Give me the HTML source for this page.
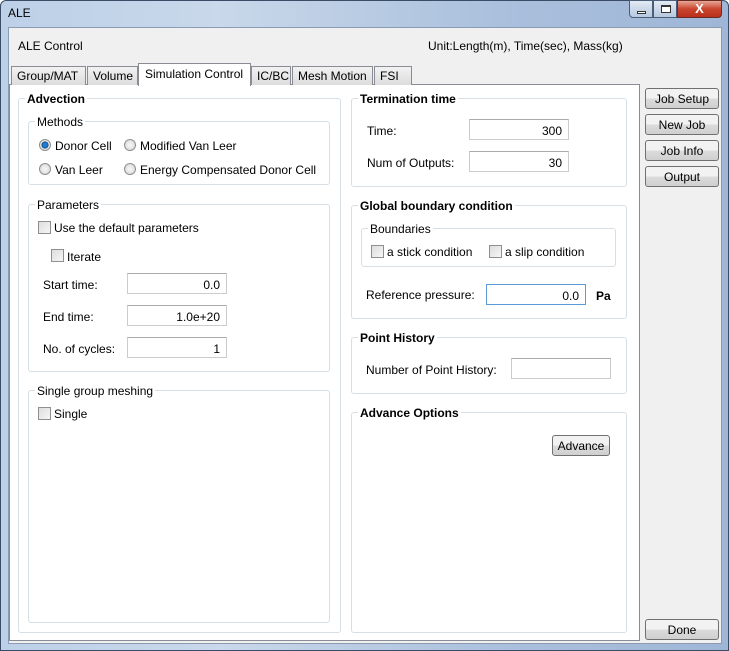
<!DOCTYPE html>
<html><head><style>
*{box-sizing:border-box;margin:0;padding:0}
body{width:729px;height:651px;overflow:hidden;font-family:"Liberation Sans",sans-serif;font-size:12px;color:#000;background:#fff}
.a{position:absolute}
.win{left:0;top:0;width:729px;height:651px;border:1px solid #3b4d66;border-radius:6px 6px 0 0;background:linear-gradient(90deg,#bcd0e8 0%,#c9d8ea 30%,#a9bfdc 70%,#9fb6d6 100%)}
.client{left:8px;top:27px;width:714px;height:617px;background:#f0f0f0;border:1px solid #8a9bb3}
.t{white-space:nowrap;line-height:14px;margin-top:1px}
.tab{height:19px;border:1px solid #898c95;border-bottom:none;background:linear-gradient(#f2f2f2,#dcdcdc);padding:2px 0 0 5px}
.panel{left:9px;top:84px;width:631px;height:557px;background:#fff;border:1px solid #898c95}
.g{border:1px solid #d5dfe5;border-radius:3px}
.gt{background:#fff;padding:0 2px;line-height:14px;white-space:nowrap;margin-top:1px}
.b{font-weight:bold}
.in{border:1px solid #ccc;border-top-color:#aaa;background:#fff;text-align:right;padding:4px 6px 0 0;height:21px;margin-top:0}
.cb{width:13px;height:13px;border:1px solid #8e8f8f;background:linear-gradient(135deg,#ddd,#f6f6f6)}
.rd{width:12px;height:12px;border:1px solid #8e8f8f;border-radius:50%;background:radial-gradient(#f8f8f8,#d4d4d4)}
.btn{border:1px solid #707070;border-radius:3px;background:linear-gradient(#f2f2f2 50%,#dcdcdc 50%,#cfcfcf);text-align:center;line-height:20px;height:21px}
</style></head><body>
<div class="a win"></div>
<div class="a t" style="left:8px;top:5px;font-size:12px">ALE</div>
<div class="a" style="left:629px;top:0;width:24px;height:18px;border:1px solid #4a5e7a;border-radius:0 0 0 4px;background:linear-gradient(#e2eaf4,#b7c8df)"><div class="a" style="left:7px;top:10px;width:9px;height:3px;border:1px solid #333;background:#fff"></div></div>
<div class="a" style="left:653px;top:0;width:24px;height:18px;border:1px solid #4a5e7a;background:linear-gradient(#e2eaf4,#b7c8df)"><div class="a" style="left:7px;top:4px;width:10px;height:8px;border:1px solid #333;border-top-width:2px;background:#fff"></div></div>
<div class="a" style="left:677px;top:0;width:45px;height:18px;border:1px solid #6b2a22;border-radius:0 0 4px 0;background:linear-gradient(#e8a797,#c9452e 50%,#b9301c);color:#fff;font-weight:bold;text-align:center;font-size:13px;line-height:15px">X</div>
<div class="a client"></div>
<div class="a t" style="left:18px;top:38px">ALE Control</div>
<div class="a t" style="left:428px;top:38px">Unit:Length(m), Time(sec), Mass(kg)</div>
<div class="a panel"></div>
<div class="a tab t" style="left:11px;top:66px;width:75px;margin-top:0">Group/MAT</div>
<div class="a tab t" style="left:87px;top:66px;width:51px;margin-top:0">Volume</div>
<div class="a tab t" style="left:251px;top:66px;width:40px;margin-top:0">IC/BC</div>
<div class="a tab t" style="left:292px;top:66px;width:81px;margin-top:0">Mesh Motion</div>
<div class="a tab t" style="left:374px;top:66px;width:38px;margin-top:0">FSI</div>
<div class="a t" style="left:138px;top:63px;width:113px;height:23px;border:1px solid #898c95;border-bottom:none;background:#fff;padding:3px 0 0 6px;margin-top:0">Simulation Control</div>

<div class="a g" style="left:18px;top:98px;width:323px;height:535px"></div>
<div class="a gt b" style="left:25px;top:91px">Advection</div>
<div class="a g" style="left:28px;top:121px;width:302px;height:64px"></div>
<div class="a gt" style="left:35px;top:114px">Methods</div>
<div class="a rd" style="left:39px;top:139px;background:radial-gradient(#1f7ad0 30%,#0b4a88 45%,#e6e6e6 55%)"></div>
<div class="a t" style="left:55px;top:138px">Donor Cell</div>
<div class="a rd" style="left:124px;top:139px"></div>
<div class="a t" style="left:140px;top:138px">Modified Van Leer</div>
<div class="a rd" style="left:39px;top:163px"></div>
<div class="a t" style="left:55px;top:162px">Van Leer</div>
<div class="a rd" style="left:124px;top:163px"></div>
<div class="a t" style="left:140px;top:162px">Energy Compensated Donor Cell</div>

<div class="a g" style="left:28px;top:204px;width:302px;height:168px"></div>
<div class="a gt" style="left:35px;top:197px">Parameters</div>
<div class="a cb" style="left:38px;top:221px"></div>
<div class="a t" style="left:54px;top:220px">Use the default parameters</div>
<div class="a cb" style="left:51px;top:249px"></div>
<div class="a t" style="left:67px;top:249px">Iterate</div>
<div class="a t" style="left:43px;top:277px">Start time:</div>
<div class="a in t" style="left:127px;top:273px;width:100px">0.0</div>
<div class="a t" style="left:43px;top:309px">End time:</div>
<div class="a in t" style="left:127px;top:305px;width:100px">1.0e+20</div>
<div class="a t" style="left:43px;top:341px">No. of cycles:</div>
<div class="a in t" style="left:127px;top:337px;width:100px">1</div>

<div class="a g" style="left:28px;top:390px;width:302px;height:233px"></div>
<div class="a gt" style="left:35px;top:383px">Single group meshing</div>
<div class="a cb" style="left:38px;top:407px"></div>
<div class="a t" style="left:54px;top:406px">Single</div>

<div class="a g" style="left:351px;top:98px;width:276px;height:89px"></div>
<div class="a gt b" style="left:358px;top:91px">Termination time</div>
<div class="a t" style="left:367px;top:123px">Time:</div>
<div class="a in t" style="left:469px;top:119px;width:100px">300</div>
<div class="a t" style="left:367px;top:155px">Num of Outputs:</div>
<div class="a in t" style="left:469px;top:151px;width:100px">30</div>

<div class="a g" style="left:351px;top:205px;width:276px;height:114px"></div>
<div class="a gt b" style="left:358px;top:198px">Global boundary condition</div>
<div class="a g" style="left:361px;top:228px;width:255px;height:39px"></div>
<div class="a gt" style="left:368px;top:221px">Boundaries</div>
<div class="a cb" style="left:371px;top:245px"></div>
<div class="a t" style="left:387px;top:244px">a stick condition</div>
<div class="a cb" style="left:489px;top:245px"></div>
<div class="a t" style="left:505px;top:244px">a slip condition</div>
<div class="a t" style="left:366px;top:287px">Reference pressure:</div>
<div class="a in t" style="left:486px;top:284px;width:100px;border-color:#5b9bd5">0.0</div>
<div class="a t b" style="left:596px;top:288px">Pa</div>

<div class="a g" style="left:351px;top:337px;width:276px;height:57px"></div>
<div class="a gt b" style="left:358px;top:330px">Point History</div>
<div class="a t" style="left:366px;top:362px">Number of Point History:</div>
<div class="a in t" style="left:511px;top:358px;width:100px"></div>

<div class="a g" style="left:351px;top:412px;width:276px;height:221px"></div>
<div class="a gt b" style="left:358px;top:405px">Advance Options</div>
<div class="a btn" style="left:552px;top:435px;width:58px">Advance</div>

<div class="a btn" style="left:645px;top:88px;width:74px">Job Setup</div>
<div class="a btn" style="left:645px;top:114px;width:74px">New Job</div>
<div class="a btn" style="left:645px;top:140px;width:74px">Job Info</div>
<div class="a btn" style="left:645px;top:166px;width:74px">Output</div>
<div class="a btn" style="left:645px;top:619px;width:74px">Done</div>
</body></html>
